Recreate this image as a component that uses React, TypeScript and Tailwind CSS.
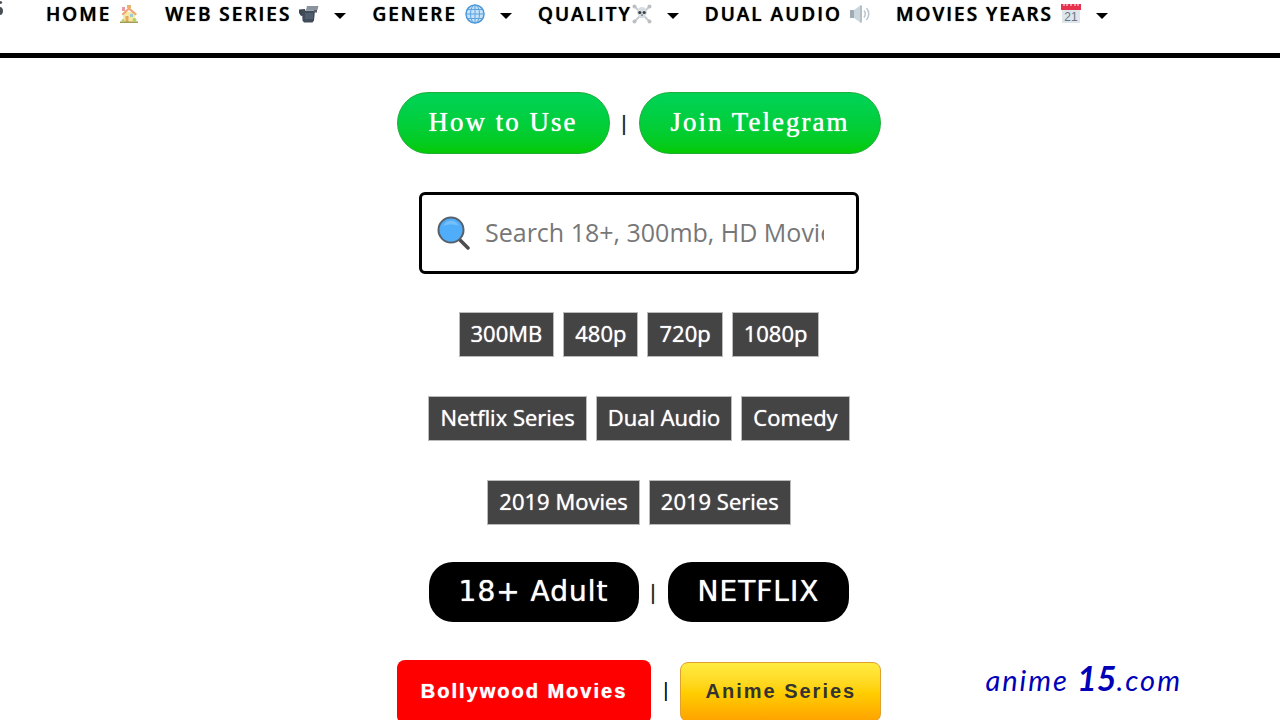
import React from "react";

const HouseIcon = () => (
  <svg viewBox="0 0 20 20" className="size-5" aria-hidden="true">
    <rect x="4" y="8" width="12" height="10" fill="#f8e8a6" />
    <path d="M2.500 10 10 3l8 7-1.500 1.500L10 6l-6 5.500z" fill="#eda877" />
    <rect x="3" y="3" width="3" height="4" fill="#ea9aa0" />
    <rect x="8" y="1" width="4" height="3" fill="#e7b36c" />
    <rect x="11" y="10" width="3" height="3" fill="#9ccbdc" />
    <rect x="6.500" y="12" width="3" height="6" fill="#e3a960" />
    <path d="M1 17.500h18V19H1z" fill="#a39a55" />
    <circle cx="15.500" cy="16" r="2" fill="#b5cf6a" />
    <circle cx="4" cy="16.500" r="1.500" fill="#b5cf6a" />
  </svg>
);

const CameraIcon = () => (
  <svg viewBox="0 0 20 20" className="size-5" aria-hidden="true">
    <path d="M8 2h11.500l-1 4H7z" fill="#8b949e" />
    <path d="M0 5.500 6 5v6l-4 1-2-3z" fill="#3c4651" />
    <path d="M3 6.500h13l-1 10-1.500 2H5l-1.500-2z" fill="#414c5a" />
    <path d="M6 9h8v6H6z" fill="#505d6e" />
    <path d="M15 6h3v2.500h-3z" fill="#555f6b" />
  </svg>
);

const GlobeIcon = () => (
  <svg viewBox="0 0 20 20" className="size-5" fill="none" stroke="#5ba3df" strokeWidth="1" aria-hidden="true">
    <circle cx="10" cy="10" r="9" fill="#c5e2f9" stroke="#4f97d5" strokeWidth="1.500" />
    <ellipse cx="10" cy="10" rx="4.500" ry="9" />
    <path d="M10 1v18M1 10h18M2.500 5.500h15M2.500 14.500h15" />
  </svg>
);

const SkullIcon = () => (
  <svg viewBox="0 0 20 20" className="size-5" aria-hidden="true">
    <path d="M3 3l14 14M17 3 3 17" stroke="#c9cccd" strokeWidth="2" />
    <g fill="#bcbfc1">
      <circle cx="2.500" cy="2.500" r="2" />
      <circle cx="17.500" cy="2.500" r="2" />
      <circle cx="2.500" cy="17.500" r="2" />
      <circle cx="17.500" cy="17.500" r="2" />
    </g>
    <path d="M5 8a5 5 0 0 1 10 0c0 2-.8 3-2 3.500V14H7v-2.500C5.800 11 5 10 5 8z" fill="#d5dde2" />
    <circle cx="7.800" cy="8.500" r="1.600" fill="#39414a" />
    <circle cx="12.200" cy="8.500" r="1.600" fill="#39414a" />
    <path d="m10 10 1 1.500H9z" fill="#39414a" />
  </svg>
);

const SpeakerIcon = () => (
  <svg viewBox="0 0 20 20" className="size-5" aria-hidden="true">
    <path d="M0 6h5v8H0z" fill="#9fabb5" />
    <path d="M4 6l7-5v18l-7-5z" fill="#ccd6dd" />
    <path d="M11 1.500v17" stroke="#b3c0ca" strokeWidth="2" />
    <path d="M14 6.500c1.500 2 1.500 5 0 7M16.500 4c3 3.500 3 8.500 0 12" fill="none" stroke="#bcc5cc" strokeWidth="1.500" />
  </svg>
);

const CalendarIcon = () => (
  <svg viewBox="0 0 20 20" className="size-5 tracking-normal text-shadow-none" aria-hidden="true">
    <path d="M1 1h18v18H1z" fill="#dfe6eb" />
    <path d="M0 0h20v6H0z" fill="#e8304f" />
    <path d="M3 0v2M6 0v2M10 0v2M14 0v2M17 0v2" stroke="#fff" strokeWidth="1" />
    <text x="10" y="17" textAnchor="middle" fontSize="12" fontFamily="Liberation Sans, sans-serif" fontWeight="400" fill="#66757f">
      21
    </text>
  </svg>
);

const SearchIcon = () => (
  <svg viewBox="0 0 34 34" className="size-[34px] shrink-0" aria-hidden="true">
    <path d="m22 23 9 9" stroke="#4d4d4f" strokeWidth="3.500" strokeLinecap="round" />
    <circle cx="14" cy="14" r="12.500" fill="#50adf9" stroke="#56616b" strokeWidth="2" />
    <path d="M6 10c3-7 13-7 16 0-4-2-12-2-16 0z" fill="#74bffc" />
  </svg>
);

interface NavItem {
  label: string;
  icon: React.ReactNode;
  menu?: boolean;
  tight?: boolean;
}

const navItems: NavItem[] = [
  { label: "HOME", icon: <HouseIcon /> },
  { label: "WEB SERIES", icon: <CameraIcon />, menu: true },
  { label: "GENERE", icon: <GlobeIcon />, menu: true },
  { label: "QUALITY", icon: <SkullIcon />, menu: true, tight: true },
  { label: "DUAL AUDIO", icon: <SpeakerIcon /> },
  { label: "MOVIES YEARS", icon: <CalendarIcon />, menu: true },
];

const tagRows = [
  ["300MB", "480p", "720p", "1080p"],
  ["Netflix Series", "Dual Audio", "Comedy"],
  ["2019 Movies", "2019 Series"],
];

const Separator = () => <span className="text-xl text-[#222] text-shadow-[0_0_1px_#222]">|</span>;

const NavBar = () => (
  <nav className="flex h-[58px] items-start border-b-5 border-black">
    <svg viewBox="0 0 3 18" className="h-[18px] w-[3px] shrink-0" aria-hidden="true">
      <path d="M0 1c3 0 3 3 0 3zM0 7c4 0 4 8 0 8z" fill="#4a4f55" />
    </svg>
    <ul className="ml-[43px] flex gap-[26px] whitespace-nowrap">
      {navItems.map((item) => (
        <li key={item.label}>
          <a
            href="#"
            className="flex h-7 items-center text-[19px] font-semibold tracking-[2px] text-black text-shadow-[0_0_1px_#000]"
          >
            <span className={item.tight ? "" : "mr-2"}>{item.label}</span>
            {item.icon}
            {item.menu && (
              <svg viewBox="0 0 12 6" className="mt-1 ml-[15px] h-[6px] w-3" aria-hidden="true">
                <path d="M0 0h12L6 6z" />
              </svg>
            )}
          </a>
        </li>
      ))}
    </ul>
  </nav>
);

const greenPill =
  "flex h-[62px] items-center rounded-full border border-[#1fae3a] bg-linear-to-b from-[#00d357] to-[#05ca00] px-[31px] pb-0.5 font-['Liberation_Serif',serif] text-[27px] tracking-[2px] text-white text-shadow-[0_0_1px_#fff]";

const blackPill =
  "flex h-[60px] items-center rounded-[24px] bg-black px-[30px] font-['DejaVu_Sans',sans-serif] text-[28px] tracking-[1px] text-white text-shadow-[0_0_1px_#fff]";

const App: React.FC = () => {
  return (
    <div className="relative h-screen overflow-hidden bg-white font-['Open_Sans',sans-serif]">
      <NavBar />
      <main className="flex flex-col items-center whitespace-nowrap pt-[34px] pr-0.5">
        <div className="flex items-center gap-[9px]">
          <a href="#" className={greenPill}>How to Use</a>
          <Separator />
          <a href="#" className={greenPill}>Join Telegram</a>
        </div>

        <label className="mt-[38px] flex h-[82px] w-[440px] items-center gap-3.5 rounded-md border-3 border-black pr-8 pl-[15px]">
          <SearchIcon />
          <input
            type="text"
            aria-label="Search movies"
            placeholder="Search 18+, 300mb, HD Movies"
            className="min-w-0 flex-1 text-[25px] outline-none placeholder:text-[#777]"
          />
        </label>

        <div className="mt-[38px] flex flex-col items-center gap-[39px]">
          {tagRows.map((row) => (
            <div key={row[0]} className="flex gap-[9px]">
              {row.map((tag) => (
                <a
                  key={tag}
                  href="#"
                  className="flex h-[45px] items-center border border-[#bbb] bg-[#444] px-[11px] pb-[3px] text-[22px] text-white text-shadow-[0_0_1px_#fff]"
                >
                  {tag}
                </a>
              ))}
            </div>
          ))}
        </div>

        <div className="mt-[37px] flex items-center gap-[9px]">
          <a href="#" className={blackPill}>18+ Adult</a>
          <Separator />
          <a href="#" className={blackPill}>NETFLIX</a>
        </div>

        <div className="mt-[38px] flex items-center gap-3 font-['Liberation_Sans',sans-serif] text-xl font-bold tracking-[2px]">
          <a href="#" className="flex h-16 items-center rounded-lg bg-[#fe0000] px-6 pb-0.5 text-white text-shadow-[0_0_1px_#fff]">
            Bollywood Movies
          </a>
          <span className="pb-1 font-normal tracking-normal text-black">|</span>
          <a
            href="#"
            className="flex h-[60px] items-center rounded-lg border border-[#e0a030] bg-linear-to-b from-[#ffec40] via-[#ffcf00] to-[#ffa200] px-6 pb-0.5 text-[#333]"
          >
            Anime Series
          </a>
        </div>
      </main>

      <p className="absolute right-[98px] bottom-5 flex items-baseline font-['Lato',sans-serif] text-[29px] leading-10 tracking-[2px] text-[#0000b8] italic">
        anime
        <span className="ml-2 text-[34px] font-bold tracking-normal">15</span>
        .com
      </p>
    </div>
  );
};

export default App;
